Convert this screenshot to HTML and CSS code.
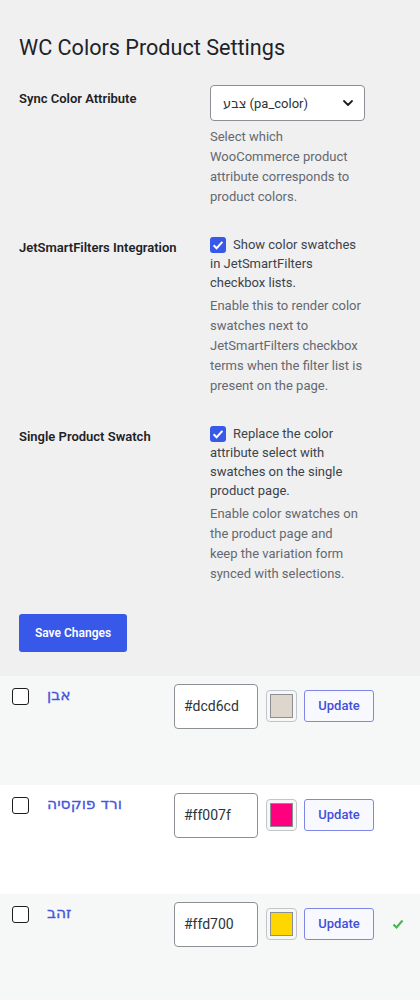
FILE: index.html
```html
<!DOCTYPE html>
<html lang="en">
<head>
<meta charset="utf-8">
<title>WC Colors Product Settings</title>
<link rel="stylesheet" href="styles.css">
</head>
<body>
<div class="wrap">
  <h1 class="title">WC Colors Product Settings</h1>
  <div class="form">
    <div class="row">
      <div class="label">Sync Color Attribute</div>
      <div class="field">
        <div class="select">
          <span class="select-text">צבע (pa_color)</span>
          <svg class="chev" width="14" height="14" viewBox="0 0 14 14"><path d="M3 5l4 4 4-4" fill="none" stroke="#1e1e1e" stroke-width="1.8" stroke-linecap="round" stroke-linejoin="round"/></svg>
        </div>
        <p class="desc desc-select">Select which WooCommerce product attribute corresponds to product colors.</p>
      </div>
    </div>
    <div class="row">
      <div class="label label-cb">JetSmartFilters Integration</div>
      <div class="field">
        <div class="cb-label"><span class="cb"><svg width="16" height="16" viewBox="0 0 16 16"><path d="M3.6 8.2l3 3 5.8-6.4" fill="none" stroke="#fff" stroke-width="2"/></svg></span>Show color swatches in JetSmartFilters checkbox lists.</div>
        <p class="desc">Enable this to render color swatches next to JetSmartFilters checkbox terms when the filter list is present on the page.</p>
      </div>
    </div>
    <div class="row">
      <div class="label label-cb">Single Product Swatch</div>
      <div class="field">
        <div class="cb-label"><span class="cb"><svg width="16" height="16" viewBox="0 0 16 16"><path d="M3.6 8.2l3 3 5.8-6.4" fill="none" stroke="#fff" stroke-width="2"/></svg></span>Replace the color attribute select with swatches on the single product page.</div>
        <p class="desc desc-narrow">Enable color swatches on the product page and keep the variation form synced with selections.</p>
      </div>
    </div>
  </div>
  <div class="submit"><span class="btn-primary">Save Changes</span></div>
</div>
<div class="terms">
  <div class="term alt">
    <span class="term-cb"></span>
    <span class="term-name">אבן</span>
    <span class="hex">#dcd6cd</span>
    <span class="swatch"><span class="swatch-color" style="background:#dcd6cd"></span></span>
    <span class="btn-update">Update</span>
  </div>
  <div class="term">
    <span class="term-cb"></span>
    <span class="term-name">ורד פוקסיה</span>
    <span class="hex">#ff007f</span>
    <span class="swatch"><span class="swatch-color" style="background:#ff007f"></span></span>
    <span class="btn-update">Update</span>
  </div>
  <div class="term alt">
    <span class="term-cb"></span>
    <span class="term-name">זהב</span>
    <span class="hex">#ffd700</span>
    <span class="swatch"><span class="swatch-color" style="background:#ffd700"></span></span>
    <span class="btn-update">Update</span>
    <svg class="ok" width="12" height="12" viewBox="0 0 12 12"><path d="M1.5 6.5l3 3 6-7" fill="none" stroke="#46b450" stroke-width="2"/></svg>
  </div>
</div>
</body>
</html>
```

FILE: styles.css
```css
html, body {
  margin: 0;
  padding: 0;
}
body {
  background: #f0f0f1;
  font-family: Roboto, "DejaVu Sans", sans-serif;
  color: #1d2327;
  width: 420px;
  overflow: hidden;
}
.wrap {
  padding: 33px 0 0 19px;
}
.title {
  margin: 0;
  font-size: 21.6px;
  line-height: 29px;
  font-weight: 400;
  color: #1d2327;
}
.form {
  margin-top: 8px;
}
.row {
  display: flex;
  padding: 15px 0 13px;
}
.label {
  width: 191px;
  flex: none;
  font-size: 13px;
  font-weight: 600;
  line-height: 18px;
  padding-top: 5px;
  color: #1d2327;
}
.label-cb {
  padding-top: 4px;
}
.field {
  width: 157px;
  flex: none;
}
.select {
  width: 155px;
  height: 36px;
  box-sizing: border-box;
  border: 1px solid #8c8f94;
  border-radius: 4px;
  background: #fff;
  display: flex;
  align-items: center;
  justify-content: space-between;
  padding: 0 9px 0 12px;
  font-size: 13px;
  color: #2c3338;
}
.desc {
  margin: 4px 0 0;
  font-size: 13px;
  line-height: 20px;
  color: #646970;
}
.desc-select {
  margin-top: 6px;
}
.desc-narrow {
  max-width: 150px;
}
.cb-label {
  font-size: 13px;
  line-height: 19px;
  color: #3c434a;
}
.cb {
  display: inline-block;
  width: 16px;
  height: 16px;
  background: #3858e9;
  border-radius: 3px;
  vertical-align: -4px;
  margin-right: 7px;
}
.cb svg {
  display: block;
}
.submit {
  padding: 17px 0 24px;
}
.btn-primary {
  display: inline-block;
  width: 108px;
  height: 38px;
  line-height: 38px;
  text-align: center;
  background: #3858e9;
  color: #fff;
  font-size: 12px;
  font-weight: 600;
  border-radius: 3px;
}
.terms {
  background: #fff;
}
.term {
  display: flex;
  align-items: flex-start;
  height: 109px;
  box-sizing: border-box;
  padding: 8px 0 0 12px;
  background: #fff;
}
.term.alt {
  background: #f6f7f7;
}
.term-cb {
  flex: none;
  width: 17px;
  height: 17px;
  box-sizing: border-box;
  border: 1.5px solid #1e1e1e;
  border-radius: 3px;
  background: #fff;
  margin-top: 4px;
}
.term-name {
  flex: none;
  width: 127px;
  margin-left: 18px;
  font-family: "DejaVu Sans", sans-serif;
  font-size: 15.5px;
  font-weight: 400;
  line-height: 22px;
  color: #4654dc;
  -webkit-text-stroke: 0.3px #4654dc;
}
.hex {
  flex: none;
  width: 84px;
  height: 45px;
  box-sizing: border-box;
  border: 1px solid #8c8f94;
  border-radius: 4px;
  background: #fff;
  padding-left: 9px;
  line-height: 43px;
  font-size: 14px;
  color: #2c3338;
}
.swatch {
  flex: none;
  width: 31px;
  height: 32px;
  box-sizing: border-box;
  margin: 6px 0 0 8px;
  border: 1px solid #c3c4c7;
  border-radius: 4px;
  background: #f6f7f7;
  padding: 3px;
}
.swatch-color {
  display: block;
  width: 100%;
  height: 100%;
  border: 1px solid #8c8f94;
  box-sizing: border-box;
}
.btn-update {
  flex: none;
  width: 70px;
  height: 32px;
  box-sizing: border-box;
  margin: 6px 0 0 7px;
  border: 1px solid #7f86e8;
  border-radius: 3px;
  background: #f8f8ff;
  color: #4350d8;
  font-size: 13px;
  font-weight: 500;
  line-height: 30px;
  text-align: center;
}
.ok {
  flex: none;
  margin: 16px 0 0 18px;
}
```
